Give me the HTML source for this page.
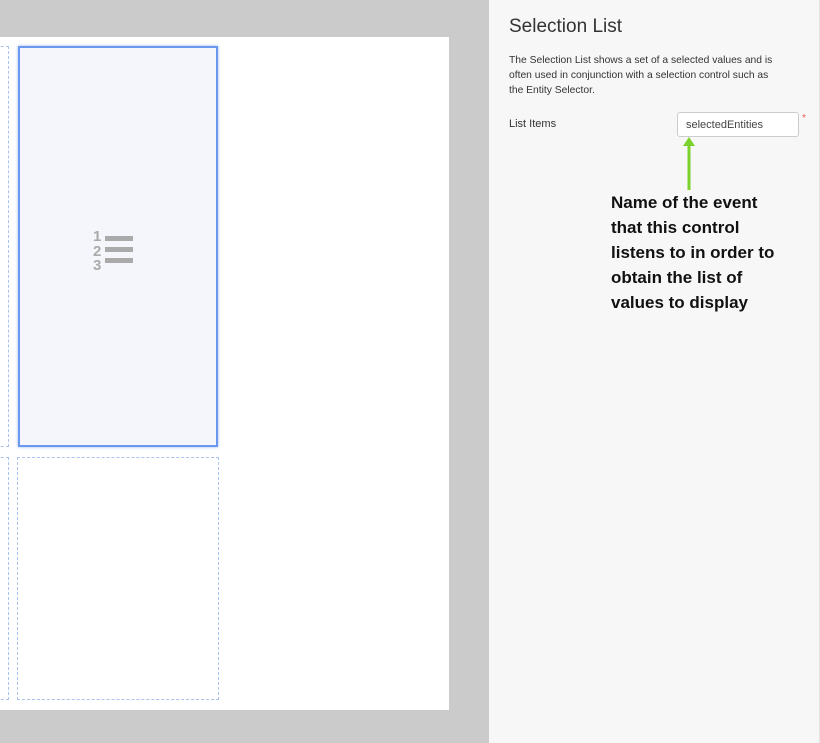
<!DOCTYPE html>
<html><head><style>
body{margin:0;width:820px;height:743px;background:#cbcbcb;position:relative;overflow:hidden;font-family:"Liberation Sans",sans-serif}
.canvas{position:absolute;left:0;top:37px;width:449px;height:673px;background:#fff}
.d{position:absolute;border:1px dashed #a9c3ee;box-sizing:border-box}
.sel{position:absolute;left:18px;top:46px;width:200px;height:401px;background:#f5f6fb;border:2px solid #6a98ee;box-sizing:border-box;box-shadow:0 0 3px #9bb9f3}
.panel{position:absolute;left:489px;top:0;width:331px;height:743px;background:#f7f7f7;border-right:1px solid #e5e5e5;box-sizing:border-box}
.t{position:absolute;color:#222}
</style></head><body>
<div class="canvas"></div>
<div class="d" style="left:-10px;top:46px;width:19px;height:401px"></div>
<div class="d" style="left:-10px;top:457px;width:19px;height:243px"></div>
<div class="d" style="left:17px;top:457px;width:202px;height:243px"></div>
<div class="sel">
<svg style="position:absolute;left:73px;top:181px" width="42" height="42" viewBox="0 0 42 42">
<g fill="#aaa" font-family="Liberation Sans" font-weight="bold" font-size="15"><text x="0" y="12">1</text><text x="0" y="27">2</text><text x="0" y="41">3</text></g>
<rect x="12" y="7" width="28" height="5" fill="#aaa"/><rect x="12" y="18" width="28" height="5" fill="#aaa"/><rect x="12" y="29" width="28" height="5" fill="#aaa"/>
</svg>
</div>
<div class="panel">
<div class="t" style="left:20px;top:16px;font-size:19px;color:#333">Selection List</div>
<div class="t" style="left:20px;top:53px;width:272px;font-size:10.3px;line-height:15px;color:#333">The Selection List shows a set of a selected values and is often used in conjunction with a selection control such as the Entity Selector.</div>
<div class="t" style="left:20px;top:118px;font-size:11px;color:#333">List Items</div>
<div style="position:absolute;left:188px;top:112px;width:122px;height:25px;border:1px solid #ccc;border-radius:3px;background:#fff;box-sizing:border-box;font-size:11px;color:#444;padding:6px 0 0 8px">selectedEntities</div>
<div class="t" style="left:313px;top:113px;color:#e55;font-size:10px">*</div>
<svg style="position:absolute;left:193px;top:134px" width="14" height="58"><path d="M7 56V8" stroke="#7bd12d" stroke-width="3"/><path d="M1 12L7 3L13 12Z" fill="#7bd12d"/></svg>
<div class="t" style="left:122px;top:190px;font-size:17px;font-weight:bold;line-height:25px;color:#111;width:180px">Name of the event that this control listens to in order to obtain the list of values to display</div>
</div>
</body></html>
